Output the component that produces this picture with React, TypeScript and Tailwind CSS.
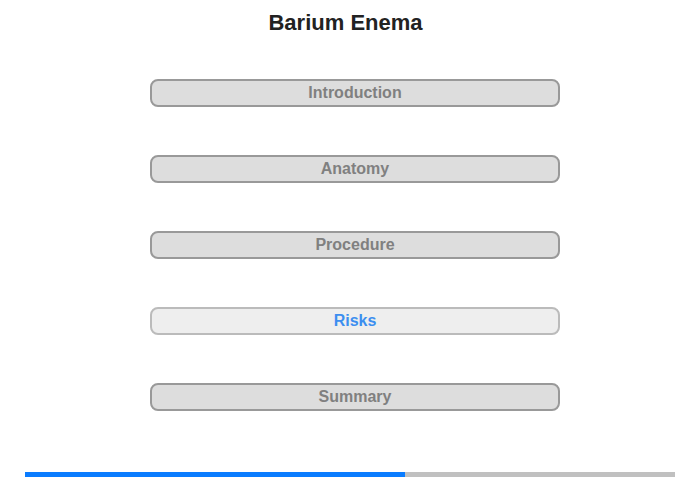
import React from 'react';

const sections = [
  { label: 'Introduction', active: false },
  { label: 'Anatomy', active: false },
  { label: 'Procedure', active: false },
  { label: 'Risks', active: true },
  { label: 'Summary', active: false },
];

const App: React.FC = () => {
  return (
    <div className="w-[700px] h-[480px] bg-white font-['Liberation_Sans',Arial,sans-serif] flex flex-col">
      {/* Title */}
      <h1 className="pt-[10px] pr-[9px] text-center text-[22px] leading-[25px] font-bold text-[#222]">
        Barium Enema
      </h1>

      {/* Menu */}
      <div className="mt-[44px] pl-[10px] flex flex-col items-center gap-[48px]">
        {sections.map((s) => (
          <button
            key={s.label}
            className={
              s.active
                ? 'w-[410px] h-[28px] rounded-[8px] border-2 border-[#bbbbbb] bg-[#eeeeee] text-[#3c8ef0] text-[16px] font-bold leading-none'
                : 'w-[410px] h-[28px] rounded-[8px] border-2 border-[#999999] bg-[#dddddd] text-[#808080] text-[16px] font-bold leading-none'
            }
          >
            {s.label}
          </button>
        ))}
      </div>

      {/* Progress */}
      <div className="mt-auto mb-[3px] mx-[25px] h-[5px] flex bg-[#c0c0c0]">
        <div className="w-[380px] h-full bg-[#0a7cff]" />
      </div>
    </div>
  );
};

export default App;
